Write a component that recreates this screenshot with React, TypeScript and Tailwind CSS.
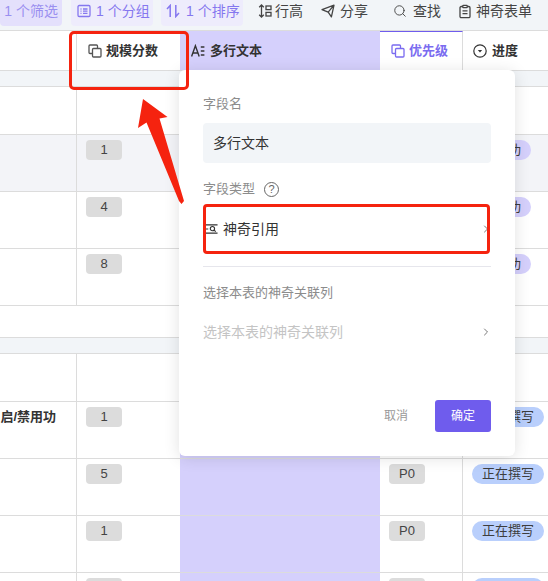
import { ChevronRight, Search } from "lucide-react";

const stack = "[font-family:'Liberation_Sans','Noto_Sans_CJK_SC',sans-serif]";

function CopyIcon({ className }: { className?: string }) {
  return (
    <svg viewBox="0 0 14 14" fill="none" stroke="currentColor" strokeWidth="1.3" className={className}>
      <path d="M4.5 9.5H2a1 1 0 0 1-1-1V2a1 1 0 0 1 1-1h6.5a1 1 0 0 1 1 1v2.5" />
      <rect x="4.5" y="4.5" width="8.5" height="8.5" rx="1" />
    </svg>
  );
}

function GroupIcon() {
  return (
    <svg viewBox="0 0 14 14" fill="none" stroke="currentColor" strokeWidth="1.3" className="h-[14px] w-[14px]">
      <rect x="1" y="1.5" width="12" height="11" rx="1.2" />
      <path d="M3.5 5h1M6 5h4.5M3.5 7.2h1M6 7.2h4.5M3.5 9.4h1M6 9.4h4.5" />
    </svg>
  );
}

function SortIcon() {
  return (
    <svg viewBox="0 0 14 14" fill="none" stroke="currentColor" strokeWidth="1.5" className="h-[14px] w-[14px]">
      <path d="M4.2 13V1.5L1 5M9.8 1v11.5L13 9" />
    </svg>
  );
}

function RowHeightIcon() {
  return (
    <svg viewBox="0 0 14 14" fill="none" stroke="currentColor" strokeWidth="1.3" className="h-[14px] w-[14px]">
      <path d="M3.5 1v12M1.2 3.2 3.5 1l2.3 2.2M1.2 10.8 3.5 13l2.3-2.2" />
      <rect x="8" y="2" width="5" height="3.6" />
      <rect x="8" y="8.4" width="5" height="3.6" />
    </svg>
  );
}

function ShareIcon() {
  return (
    <svg viewBox="0 0 14 14" fill="none" stroke="currentColor" strokeWidth="1.3" strokeLinejoin="round" className="h-[14px] w-[14px]">
      <path d="M1 5.6 13 1.2l-2.6 11.6-3.2-4.6zM7.2 8.2 13 1.2" />
    </svg>
  );
}

function FormIcon() {
  return (
    <svg viewBox="0 0 14 14" fill="none" stroke="currentColor" strokeWidth="1.3" className="h-[15px] w-[14px]">
      <rect x="2" y="2" width="10" height="11.2" rx="1.2" />
      <rect x="4.8" y="0.8" width="4.4" height="2.4" rx="0.6" fill="#f2f5f8" />
      <path d="M4.5 6.4h5M4.5 9.2h5" />
    </svg>
  );
}

function TextIcon() {
  return (
    <svg viewBox="0 0 14 14" fill="none" stroke="currentColor" strokeWidth="1.4" className="h-[14px] w-[14px]">
      <path d="M.6 12.5 4.4 1.8l3.8 10.7M1.9 9h5M9.8 3h3.6M9.8 7h3.6M9.8 11h3.6" />
    </svg>
  );
}

function ProgressIcon() {
  return (
    <svg viewBox="0 0 14 14" fill="none" stroke="currentColor" strokeWidth="1.2" className="h-[14px] w-[14px]">
      <circle cx="7" cy="7" r="6.2" />
      <path d="M4.8 6h4.4L7 8.6z" fill="currentColor" stroke="none" />
    </svg>
  );
}

function QuoteIcon() {
  return (
    <svg viewBox="0 0 14 12" fill="none" stroke="currentColor" strokeWidth="1.2" className="h-[12px] w-[13px]">
      <path d="M.5 1.5h13M.5 6h3M.5 10.5h13" />
      <circle cx="8" cy="5.6" r="2.3" />
      <path d="m9.8 7.3 1.8 1.5" />
    </svg>
  );
}

function Tag({ text }: { text: string }) {
  return (
    <div className="flex h-[20px] w-[36px] items-center justify-center rounded-[4px] bg-[#dcdcdc] text-[13px] text-[#444]">
      {text}
    </div>
  );
}

function Pill({ text, blue }: { text: string; blue?: boolean }) {
  return (
    <div
      className={
        blue
          ? "flex h-[20px] w-[72px] items-center justify-center rounded-full bg-[#b9cffc] text-[13px] text-[#3d3d3d]"
          : "flex h-[20px] w-[59px] items-center justify-center rounded-full bg-[#d5d0fc] text-[13px] text-[#3d3d3d]"
      }
    >
      {text}
    </div>
  );
}

type RowProps = {
  h: string;
  score?: string;
  prio?: string;
  status?: string;
  blue?: boolean;
  title?: string;
  active?: boolean;
};

function Row({ h, score, prio, status, blue, title, active }: RowProps) {
  return (
    <div
      className={`grid shrink-0 grid-cols-[77px_103px_200px_83px_85px] border-b border-[#dcdcdc] ${h} ${
        active ? "bg-[#f3f4f8]" : "bg-white"
      }`}
    >
      <div className="flex justify-end overflow-hidden whitespace-nowrap border-r border-[#dcdcdc] pr-[20px] pt-[5px] text-[13px] font-semibold leading-[20px] text-[#333]">
        {title}
      </div>
      <div className={`pl-[9px] pt-[5px] ${active ? "border-r border-[#6f5ced]" : ""}`}>
        {score && <Tag text={score} />}
      </div>
      <div className="bg-[#d5d0fc]" />
      <div className="border-r border-[#dcdcdc] pl-[9px] pt-[5px]">{prio && <Tag text={prio} />}</div>
      <div className="pl-[9px] pt-[5px]">{status && <Pill text={status} blue={blue} />}</div>
    </div>
  );
}

function GroupRow() {
  return <div className="h-[16px] shrink-0 border-b border-[#dcdcdc] bg-[#f2f5f8]" />;
}

function Toolbar() {
  return (
    <div className="flex h-[31px] shrink-0 items-start border-b border-[#dcdcdc] bg-[#f2f5f8] text-[14px] text-[#444]">
      <div className="flex h-[26px] w-[62px] items-center justify-end rounded-b-[4px] bg-[#e4e0fc] pb-[4px] pr-[4px] text-[#9a8ff0]">
        1 个筛选
      </div>
      <div className="ml-[9px] flex h-[26px] w-[82px] items-center gap-[5px] rounded-b-[4px] bg-[#eeecfc] pb-[4px] pl-[6px] text-[#8577ef]">
        <GroupIcon />
        <span>1 个分组</span>
      </div>
      <div className="ml-[8px] flex h-[26px] w-[82px] items-center gap-[6px] rounded-b-[4px] bg-[#eeecfc] pb-[4px] pl-[5px] text-[#8577ef]">
        <SortIcon />
        <span>1 个排序</span>
      </div>
      <div className="ml-[15px] flex h-[22px] items-center gap-[3px]">
        <RowHeightIcon />
        <span>行高</span>
      </div>
      <div className="ml-[18px] flex h-[22px] items-center gap-[5px]">
        <ShareIcon />
        <span>分享</span>
      </div>
      <div className="ml-[25px] flex h-[22px] items-center gap-[6px]">
        <Search className="h-[14px] w-[14px]" strokeWidth={1.6} />
        <span>查找</span>
      </div>
      <div className="ml-[17px] flex h-[22px] items-center gap-[4px]">
        <FormIcon />
        <span>神奇表单</span>
      </div>
    </div>
  );
}

function Header() {
  return (
    <div className="grid h-[40px] shrink-0 grid-cols-[77px_103px_200px_83px_85px] border-b border-[#dcdcdc] bg-white text-[13px] font-semibold text-[#333]">
      <div className="border-r border-[#dcdcdc]" />
      <div className="flex items-center gap-[4px] pl-[11px]">
        <CopyIcon className="h-[14px] w-[14px] text-[#555]" />
        <span>规模分数</span>
      </div>
      <div className="flex items-center gap-[5px] bg-[#d5d0fc] pl-[11px]">
        <TextIcon />
        <span>多行文本</span>
      </div>
      <div className="flex items-center gap-[4px] border-r border-t border-r-[#dcdcdc] border-t-[#6f5ced] pl-[11px] text-[#7a6bf0]">
        <CopyIcon className="h-[14px] w-[14px]" />
        <span>优先级</span>
      </div>
      <div className="flex items-center gap-[5px] pl-[10px]">
        <ProgressIcon />
        <span>进度</span>
      </div>
    </div>
  );
}

function FieldPopup() {
  return (
    <div className="absolute left-[179px] top-[70px] flex h-[386px] w-[336px] flex-col rounded-[6px] bg-white px-[24px] pt-[24px] shadow-[0_2px_16px_rgba(0,0,0,0.12)]">
      <div className="h-[20px] text-[13px] leading-[20px] text-[#8c8c8c]">字段名</div>
      <div className="mt-[9px] flex h-[40px] items-center rounded-[4px] bg-[#f2f5f8] pl-[10px] text-[14px] text-[#333]">
        多行文本
      </div>
      <div className="mt-[16px] flex h-[20px] items-center gap-[9px] text-[13px] text-[#8c8c8c]">
        字段类型
        <span className="flex h-[15px] w-[15px] items-center justify-center rounded-full border border-[#666] text-[11px] text-[#666]">
          ?
        </span>
      </div>
      <div className="mt-[5px] flex h-[50px] items-center pl-[2px] text-[14px] text-[#333]">
        <QuoteIcon />
        <span className="ml-[5px] flex-1">神奇引用</span>
        <ChevronRight className="-mr-px h-[12px] w-[12px] text-[#777]" />
      </div>
      <div className="mt-[12px] h-px bg-[#e6e6ec]" />
      <div className="mt-[16px] h-[20px] text-[13px] leading-[20px] text-[#8c8c8c]">选择本表的神奇关联列</div>
      <div className="mt-[19px] flex h-[20px] items-center text-[14px] text-[#c4c4c4]">
        <span className="flex-1">选择本表的神奇关联列</span>
        <ChevronRight className="-mr-px h-[12px] w-[12px] text-[#777]" />
      </div>
      <div className="mt-[58px] flex items-center justify-end gap-[27px] text-[12px]">
        <span className="text-[#999]">取消</span>
        <div className="flex h-[32px] w-[56px] items-center justify-center rounded-[3px] bg-[#6f5ced] text-white">确定</div>
      </div>
    </div>
  );
}

function Annotations() {
  return (
    <>
      <div className="absolute left-[69px] top-[31px] h-[59px] w-[120px] rounded-[5px] border-[3px] border-[#f5230f]" />
      <div className="absolute left-[203px] top-[204px] h-[50px] w-[287px] rounded-[4px] border-[3px] border-[#f5230f]" />
      <svg viewBox="0 0 548 581" className="absolute left-0 top-0 h-[581px] w-[548px]">
        <polygon points="143,99 167.5,117 159.5,118.5 184,201 181.5,204 179,201 146.5,122.5 138,128" fill="#f5230f" />
      </svg>
    </>
  );
}

export default function App() {
  return (
    <div className={`relative flex h-[581px] w-[548px] flex-col overflow-hidden bg-white ${stack}`}>
      <Toolbar />
      <Header />
      <GroupRow />
      <Row h="h-[48px]" />
      <Row h="h-[57px]" score="1" status="已成功" active />
      <Row h="h-[57px]" score="4" status="已成功" />
      <Row h="h-[57px]" score="8" status="已成功" />
      <div className="h-[32px] shrink-0 border-b border-[#dcdcdc] bg-white" />
      <GroupRow />
      <Row h="h-[48px]" />
      <Row h="h-[57px]" title="启/禁用功" score="1" status="正在撰写" blue />
      <Row h="h-[57px]" score="5" prio="P0" status="正在撰写" blue />
      <Row h="h-[57px]" score="1" prio="P0" status="正在撰写" blue />
      <Row h="h-[57px]" score={"\u00a0"} prio={"\u00a0"} status={"\u00a0"} blue />
      <FieldPopup />
      <Annotations />
    </div>
  );
}
